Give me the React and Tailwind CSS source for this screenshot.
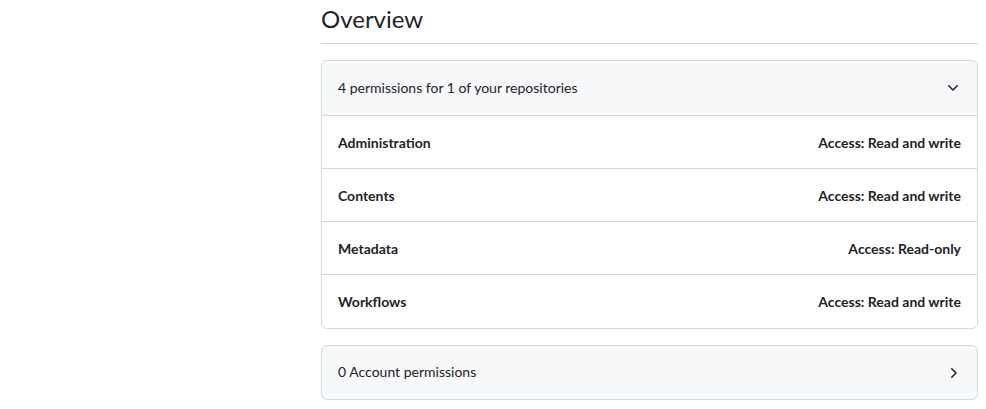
import React from "react";

const rows = [
  ["Administration", "Access: Read and write"],
  ["Contents", "Access: Read and write"],
  ["Metadata", "Access: Read-only"],
  ["Workflows", "Access: Read and write"],
];

function ChevronDown() {
  return (
    <svg width="16" height="16" viewBox="0 0 16 16" fill="#1f2328">
      <path d="M12.78 5.22a.749.749 0 0 1 0 1.06l-4.25 4.25a.749.749 0 0 1-1.06 0L3.22 6.28a.749.749 0 1 1 1.06-1.06L8 8.939l3.72-3.719a.749.749 0 0 1 1.06 0Z" />
    </svg>
  );
}

function ChevronRight() {
  return (
    <svg width="16" height="16" viewBox="0 0 16 16" fill="#1f2328">
      <path d="M6.22 3.22a.75.75 0 0 1 1.06 0l4.25 4.25a.75.75 0 0 1 0 1.06l-4.25 4.25a.751.751 0 0 1-1.042-.018.751.751 0 0 1-.018-1.042L9.94 8 6.22 4.28a.75.75 0 0 1 0-1.06Z" />
    </svg>
  );
}

export default function App() {
  return (
    <div
      className="w-[986px] h-[409px] bg-white overflow-hidden flex text-[#1f2328]"
      style={{ fontFamily: 'Lato, "Noto Sans", sans-serif' }}
    >
      <div className="w-[321px] shrink-0" />
      <div className="w-[657px] shrink-0">
        <div className="border-b border-[#d1d9e0] pt-[1px] pb-[6px]">
          <h2 className="text-[24px] leading-[36px] font-normal">Overview</h2>
        </div>
        <div className="mt-4 border border-[#d1d9e0] rounded-md overflow-hidden">
          <div className="h-[55px] bg-[#f6f8fa] border-b border-[#d1d9e0] flex items-center justify-between pl-4 pr-4">
            <span className="text-[14px] -mt-[2px]">4 permissions for 1 of your repositories</span>
            <ChevronDown />
          </div>
          {rows.map(([name, access], i) => (
            <div
              key={name}
              className={`h-[53px] flex items-center justify-between px-4 ${i < rows.length - 1 ? "border-b border-[#d1d9e0]" : ""}`}
            >
              <span className="text-[14px] font-bold">{name}</span>
              <span className="text-[14px] font-bold">{access}</span>
            </div>
          ))}
        </div>
        <div className="mt-4 h-[55px] bg-[#f6f8fa] border border-[#d1d9e0] rounded-md flex items-center justify-between px-4">
          <span className="text-[14px] -mt-[2px]">0 Account permissions</span>
          <ChevronRight />
        </div>
      </div>
    </div>
  );
}
